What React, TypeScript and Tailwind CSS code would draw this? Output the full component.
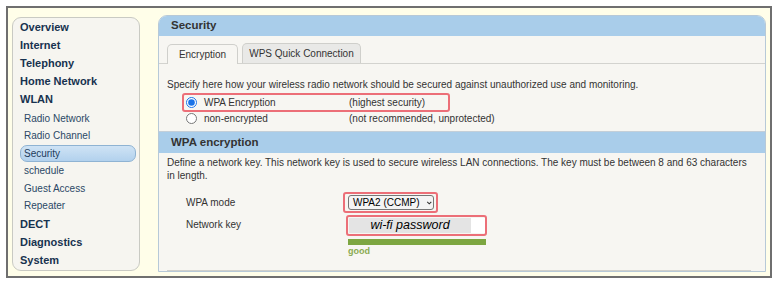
const menu = [
  { label: "Overview", sub: false },
  { label: "Internet", sub: false },
  { label: "Telephony", sub: false },
  { label: "Home Network", sub: false },
  { label: "WLAN", sub: false },
  { label: "Radio Network", sub: true },
  { label: "Radio Channel", sub: true },
  { label: "Security", sub: true, active: true },
  { label: "schedule", sub: true },
  { label: "Guest Access", sub: true },
  { label: "Repeater", sub: true },
  { label: "DECT", sub: false },
  { label: "Diagnostics", sub: false },
  { label: "System", sub: false },
];

const Sidebar: React.FC = () => (
  <nav className="mt-[9px] ml-[4px] w-[128px] h-[254px] shrink-0 rounded-[9px] border border-[#c9cac3] bg-[#f6f5f0] pl-[7px] pr-[3px]">
    {menu.map((m, i) =>
      m.sub ? (
        <div
          key={m.label}
          className={`${i === 5 ? "mt-[1.5px]" : ""} h-[17.5px] flex items-center text-[10px] ${
            m.active
              ? "rounded-[7px] border border-[#8fb3d3] bg-[linear-gradient(#cfe3f5,#b2d1ed)] pl-[3px] text-[#1d3c5c]"
              : "pl-[4px] text-[#2b4866]"
          }`}
        >
          {m.label}
        </div>
      ) : (
        <div
          key={m.label}
          className={`${i === 11 ? "mt-[0.5px]" : ""} h-[18px] flex items-center text-[11px] font-bold text-[#17324f]`}
        >
          {m.label}
        </div>
      )
    )}
  </nav>
);

const Radio: React.FC<{ checked?: boolean }> = ({ checked }) => (
  <input type="radio" checked={!!checked} readOnly className="m-0 w-[11px] h-[11px] shrink-0 accent-[#1a73e8]" />
);

const Main: React.FC = () => (
  <section className="mt-[7px] ml-[18px] w-[608px] shrink-0 rounded-t-[9px] border border-[#b7c9d8] bg-[#f7f6f2] text-[10px] text-[#333]">
    <div className="h-[20px] rounded-t-[8px] bg-[#a9cdea] pl-[12px] flex items-center text-[11.5px] font-bold text-[#333]">Security</div>
    <div className="h-[28px] border-b border-[#d3d3cf] flex items-end pl-[8px] gap-[4px]">
      <div className="h-[20px] w-[71px] rounded-t-[5px] border border-b-0 border-[#cfcfcb] bg-[#f7f6f2] flex items-center justify-center -mb-[1px]">Encryption</div>
      <div className="h-[20px] w-[119px] rounded-t-[5px] border border-b-0 border-[#cfcfcb] bg-[#e9e9e7] flex items-center justify-center">WPS Quick Connection</div>
    </div>
    <div className="pl-[8px] pt-[14px] h-[67px]">
      <p className="leading-[13px]">Specify here how your wireless radio network should be secured against unauthorized use and monitoring.</p>
      <div className="mt-[2px] ml-[15px] w-[268px] h-[19px] rounded-[3px] border-2 border-[#ec6f78] flex items-center pl-[2px]">
        <Radio checked />
        <span className="ml-[7px] w-[145px]">WPA Encryption</span>
        <span>(highest security)</span>
      </div>
      <div className="ml-[19px] h-[13px] flex items-center">
        <Radio />
        <span className="ml-[7px] w-[145px]">non-encrypted</span>
        <span>(not recommended, unprotected)</span>
      </div>
    </div>
    <div className="border-t border-[#c4cfd8] h-[22px] bg-[#a9cdea] pl-[12px] flex items-center text-[11.5px] font-bold text-[#333]">WPA encryption</div>
    <div className="pl-[8px] pr-[14px] pt-[3px]">
      <p className="leading-[13px]">
        Define a network key. This network key is used to secure wireless LAN connections. The key must be between 8 and 63 characters in length.
      </p>
      <div className="mt-[10px] flex items-center h-[21px]">
        <span className="ml-[19px] w-[157px]">WPA mode</span>
        <div className="w-[95px] h-[21px] rounded-[3px] border-2 border-[#ec6f78] flex items-center pl-[3px]">
          <div className="w-[86px] h-[15px] rounded-[3px] border border-[#767676] bg-[#f4f4f4] flex items-center pl-[4px] text-[10px] text-black whitespace-nowrap">
            WPA2 (CCMP)
            <svg width="8" height="6" viewBox="0 0 8 6" className="ml-[7px]"><path d="M1.5 1.5 L4 4 L6.5 1.5" fill="none" stroke="#333" strokeWidth="1.3" /></svg>
          </div>
        </div>
      </div>
      <div className="mt-[2px] flex items-start">
        <span className="ml-[19px] w-[160px] mt-[2px]">Network key</span>
        <div>
          <div className="w-[141px] h-[21px] rounded-[3px] border-2 border-[#ec6f78] flex items-center pl-[1px]">
            <div className="w-[136px] h-[15px] bg-white flex">
              <div className="w-[122px] h-full bg-[#e4e4e4] flex items-center justify-center text-[12.5px] italic text-black">wi-fi password</div>
            </div>
          </div>
          <div className="mt-[3px] ml-[2px] w-[138px] h-[6px] bg-[#7da641]" />
          <div className="ml-[2px] text-[9px] font-bold text-[#8aaa50] leading-[12px]">good</div>
        </div>
      </div>
      <div className="mt-[13px] h-px bg-[#d0d0cb]" />
    </div>
  </section>
);

export default function App() {
  return (
    <div className="w-[778px] h-[282px] bg-white pt-[6px] pl-[6px] font-['Liberation_Sans',Arial,sans-serif]">
      <div className="w-[766px] h-[272px] border-2 border-[#6f6f6f] bg-[#fffee9] overflow-hidden flex items-start">
        <Sidebar />
        <Main />
      </div>
    </div>
  );
}
